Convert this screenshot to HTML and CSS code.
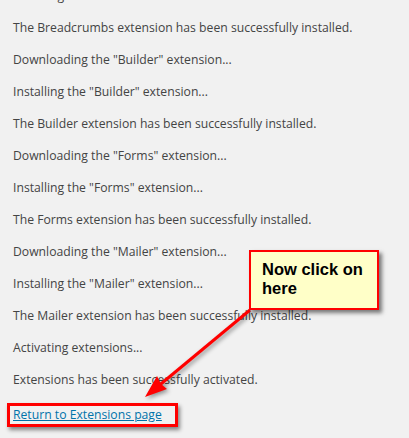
FILE: index.html
```html
<!DOCTYPE html>
<html>
<head>
<meta charset="utf-8">
<link rel="stylesheet" href="styles.css">
</head>
<body>
<div class="log">
  <p>Installing the "Breadcrumbs" extension...</p>
  <p>The Breadcrumbs extension has been successfully installed.</p>
  <p>Downloading the "Builder" extension...</p>
  <p>Installing the "Builder" extension...</p>
  <p>The Builder extension has been successfully installed.</p>
  <p>Downloading the "Forms" extension...</p>
  <p>Installing the "Forms" extension...</p>
  <p>The Forms extension has been successfully installed.</p>
  <p>Downloading the "Mailer" extension...</p>
  <p>Installing the "Mailer" extension...</p>
  <p>The Mailer extension has been successfully installed.</p>
  <p>Activating extensions...</p>
  <p>Extensions has been successfully activated.</p>
  <p><span class="mark"><a href="#">Return to Extensions page</a></span></p>
</div>
<svg class="arrow" width="409" height="438" viewBox="0 0 409 438">
  <line x1="250" y1="310" x2="156" y2="388" stroke="#ff0000" stroke-width="3"/>
  <polygon points="145,397 157,376 161,384 167,389" fill="#ff0000"/>
</svg>
<div class="callout">Now click on here</div>
</body>
</html>
```
FILE: styles.css
```css
html, body {
  margin: 0;
  padding: 0;
  background: #f1f1f1;
  overflow: hidden;
}
body {
  width: 409px;
  height: 438px;
  position: relative;
  font-family: "Open Sans", "Noto Sans", sans-serif;
  font-size: 12.2px;
  color: #444;
}
.log {
  padding-left: 13px;
  margin-top: -27px;
}
.log p {
  margin: 14px 0;
  line-height: 18px;
}
.log a {
  color: #0073aa;
  text-decoration: underline;
}
.mark {
  display: inline-block;
  margin-left: -6px;
  padding: 0 13px 0 3px;
  border: 3px solid #ff0000;
  line-height: 18px;
  box-shadow: 2px 3px 4px rgba(0,0,0,0.45);
}
.arrow {
  position: absolute;
  left: 0;
  top: 0;
  filter: drop-shadow(2px 2px 2px rgba(0,0,0,0.4));
}
.callout {
  position: absolute;
  left: 249px;
  top: 250px;
  width: 104px;
  height: 40px;
  padding: 8px 11px 8px 11px;
  background: #ffffc8;
  border: 2px solid #ff0000;
  box-shadow: 3px 3px 4px rgba(0,0,0,0.5);
  font-family: "Liberation Sans", Arial, sans-serif;
  font-weight: bold;
  font-size: 16.5px;
  line-height: 19px;
  color: #000;
}
```
